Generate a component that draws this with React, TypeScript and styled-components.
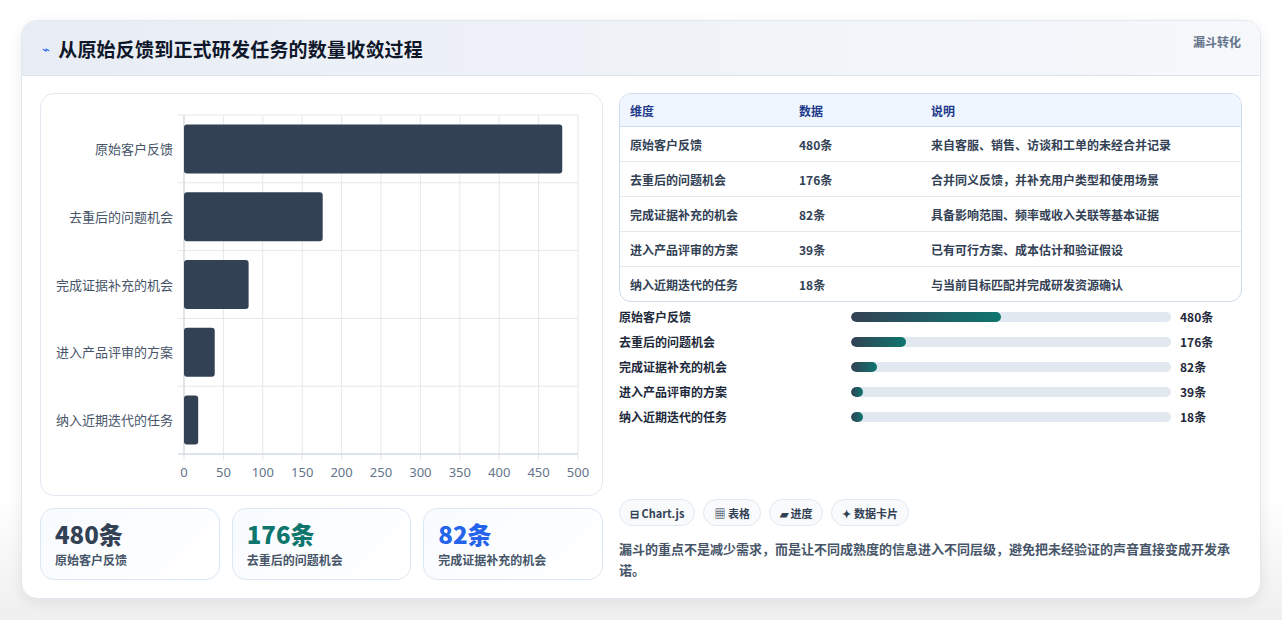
import React from "react";
import styled, { createGlobalStyle } from "styled-components";

const Global = createGlobalStyle`
  html, body { margin: 0; padding: 0; background: #f3f4f6; }
  body { font-family: "Noto Sans CJK SC", "Noto Sans", sans-serif; color: #1e293b; }
`;

const Page = styled.div`
  width: 1282px; height: 620px; box-sizing: border-box;
  padding: 20px 21px 21px 21px;
  background: linear-gradient(#ffffff 0, #ffffff 80%, #efefef 100%);
`;
const Card = styled.div`
  width: 1240px; height: 579px; box-sizing: border-box;
  background: #fff; border: 1px solid #e2e8f0; border-radius: 16px;
  box-shadow: 0 4px 14px rgba(15, 23, 42, 0.08);
  overflow: hidden; display: flex; flex-direction: column;
`;
const Header = styled.div`
  height: 55px; flex: none; box-sizing: border-box;
  display: flex; align-items: center; justify-content: space-between;
  padding: 0 19px 0 20px;
  background: linear-gradient(90deg, #e8edf5, #f6f8fb);
  border-bottom: 1px solid #dbe5f0;
`;
const Title = styled.h1`
  margin: 0; font-size: 19px; font-weight: 700; color: #0f172a;
  display: flex; align-items: center; gap: 8px; letter-spacing: 0.2px;
`;
const Bolt = styled.span` color: #2563eb; font-size: 13px; font-weight: 400; `;
const Tag = styled.span` font-size: 12px; font-weight: 700; color: #64748b; margin-top: -14px; `;
const Body = styled.div`
  flex: 1; display: grid; grid-template-columns: 563px 623px; gap: 16px;
  padding: 17px 18px 18px 18px;
`;
const Col = styled.div` display: flex; flex-direction: column; gap: 12px; min-height: 0; `;
const ChartBox = styled.div`
  height: 403px; box-sizing: border-box; border: 1px solid #e2e8f0; border-radius: 14px;
`;
const Kpis = styled.div` display: grid; grid-template-columns: 1fr 1fr 1fr; gap: 12px; `;
const Kpi = styled.div`
  height: 72px; box-sizing: border-box; border: 1px solid #dbe7f3; border-radius: 14px;
  padding: 10px 14px; background: linear-gradient(135deg, #f8fbff, #ffffff);
`;
const KpiVal = styled.div<{ $c: string }>`
  font-size: 24px; font-weight: 800; color: ${p => p.$c}; line-height: 30px;
  font-family: "Noto Sans CJK SC", sans-serif;
`;
const KpiLabel = styled.div` font-size: 12px; font-weight: 600; color: #475569; margin-top: 2px; `;

const Table = styled.table`
  width: 100%; border-collapse: separate; border-spacing: 0;
  border: 1px solid #cddbea; border-radius: 12px; overflow: hidden; font-size: 12px;
`;
const Th = styled.th<{ $w?: number }>`
  text-align: left; height: 32px; padding: 0 10px; background: #eff6ff;
  color: #1e3a8a; font-weight: 700; border-bottom: 1px solid #cddbea;
  width: ${p => (p.$w ? p.$w + "px" : "auto")};
`;
const Td = styled.td<{ $last?: boolean }>`
  height: 34px; padding: 0 10px; color: #334155; font-weight: 600;
  border-bottom: ${p => (p.$last ? "none" : "1px solid #e5eaf0")};
`;
const Bars = styled.div` display: flex; flex-direction: column; gap: 8px; margin-top: 6px; `;
const BarRow = styled.div`
  display: grid; grid-template-columns: 232px 320px 1fr; align-items: center; gap: 0;
  font-size: 12px; font-weight: 600; color: #1e293b; height: 17px;
`;
const Track = styled.div` height: 10px; border-radius: 5px; background: #e2e8f0; overflow: hidden; `;
const Fill = styled.div`
  height: 100%; border-radius: 5px; min-width: 12px;
  background: linear-gradient(90deg, #334155, #0f766e);
`;
const BarVal = styled.span` padding-left: 9px; font-weight: 700; `;
const Spacer = styled.div` flex: 1; `;
const Chips = styled.div` display: flex; gap: 8px; `;
const Chip = styled.span`
  height: 27px; box-sizing: border-box; padding: 0 10px; border-radius: 14px;
  border: 1px solid #e2e8f0; background: #f8fafc; display: inline-flex; align-items: center; gap: 4px;
  font-size: 11px; font-weight: 700; color: #334155;
`;
const Note = styled.p`
  margin: 0 0 0 0; font-size: 13px; line-height: 21px; color: #475569; font-weight: 600;
`;

const data = [
  ["原始客户反馈", 480, "来自客服、销售、访谈和工单的未经合并记录"],
  ["去重后的问题机会", 176, "合并同义反馈，并补充用户类型和使用场景"],
  ["完成证据补充的机会", 82, "具备影响范围、频率或收入关联等基本证据"],
  ["进入产品评审的方案", 39, "已有可行方案、成本估计和验证假设"],
  ["纳入近期迭代的任务", 18, "与当前目标匹配并完成研发资源确认"],
] as const;

function Chart() {
  const x0 = 143, x1 = 537, y0 = 21, y1 = 360;
  const sx = (v: number) => x0 + (v / 500) * (x1 - x0);
  const band = (y1 - y0) / 5;
  return (
    <svg width="561" height="401" style={{ display: "block" }}>
      {Array.from({ length: 11 }, (_, i) => (
        <line key={i} x1={sx(i * 50)} x2={sx(i * 50)} y1={y0} y2={y1 + 6} stroke="#e5e7eb" />
      ))}
      {Array.from({ length: 6 }, (_, i) => (
        <line key={i} x1={x0 - 6} x2={x1} y1={y0 + i * band} y2={y0 + i * band} stroke="#e5e7eb" />
      ))}
      <line x1={x0} x2={x0} y1={y0} y2={y1} stroke="#d1d5db" />
      <line x1={x0 - 6} x2={x1} y1={y1} y2={y1} stroke="#cbd5e1" />
      {data.map(([l, v], i) => {
        const cy = y0 + band * i + band / 2;
        return (
          <g key={l}>
            <rect x={x0} y={cy - 24.5} width={sx(v) - x0} height={49} rx={3} fill="#334155" />
            <text x={x0 - 11} y={cy + 5} textAnchor="end" fontSize="13" fill="#475569"
              fontFamily='"Noto Sans CJK SC", sans-serif'>{l}</text>
          </g>
        );
      })}
      {Array.from({ length: 11 }, (_, i) => (
        <text key={i} x={sx(i * 50)} y={383} textAnchor="middle" fontSize="13" fill="#64748b"
          fontFamily='"Noto Sans", sans-serif'>{i * 50}</text>
      ))}
    </svg>
  );
}

export default function App() {
  return (
    <Page>
      <Global />
      <Card>
        <Header>
          <Title><Bolt>⌁</Bolt>从原始反馈到正式研发任务的数量收敛过程</Title>
          <Tag>漏斗转化</Tag>
        </Header>
        <Body>
          <Col>
            <ChartBox><Chart /></ChartBox>
            <Kpis>
              <Kpi><KpiVal $c="#334155">480条</KpiVal><KpiLabel>原始客户反馈</KpiLabel></Kpi>
              <Kpi><KpiVal $c="#0f766e">176条</KpiVal><KpiLabel>去重后的问题机会</KpiLabel></Kpi>
              <Kpi><KpiVal $c="#2563eb">82条</KpiVal><KpiLabel>完成证据补充的机会</KpiLabel></Kpi>
            </Kpis>
          </Col>
          <Col style={{ gap: 0 }}>
            <Table>
              <thead><tr><Th $w={149}>维度</Th><Th $w={112}>数据</Th><Th>说明</Th></tr></thead>
              <tbody>
                {data.map(([l, v, d], i) => (
                  <tr key={l}><Td $last={i === 4}>{l}</Td><Td $last={i === 4}>{v}条</Td><Td $last={i === 4}>{d}</Td></tr>
                ))}
              </tbody>
            </Table>
            <Bars>
              {data.map(([l, v]) => (
                <BarRow key={l}>
                  <span>{l}</span>
                  <Track><Fill style={{ width: `${(v / 480) * 47}%` }} /></Track>
                  <BarVal>{v}条</BarVal>
                </BarRow>
              ))}
            </Bars>
            <Spacer />
            <Chips>
              <Chip>⊟ Chart.js</Chip><Chip>▦ 表格</Chip><Chip>▰ 进度</Chip><Chip>✦ 数据卡片</Chip>
            </Chips>
            <Note style={{ marginTop: 12 }}>漏斗的重点不是减少需求，而是让不同成熟度的信息进入不同层级，避免把未经验证的声音直接变成开发承诺。</Note>
          </Col>
        </Body>
      </Card>
    </Page>
  );
}
